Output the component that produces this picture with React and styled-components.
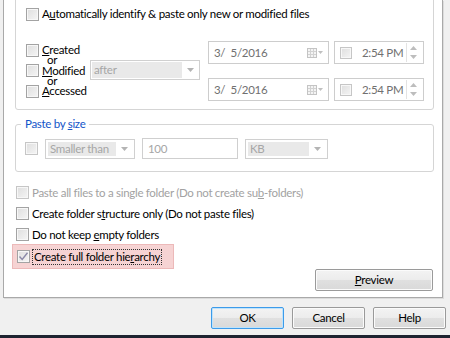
import React from 'react';
import styled, { createGlobalStyle } from 'styled-components';

const GlobalStyle = createGlobalStyle`
  html, body {
    margin: 0;
    padding: 0;
    background: #f0f0f0;
  }
  body {
    font-family: Lato, 'Noto Sans', sans-serif;
    font-size: 11.5px;
    letter-spacing: -0.3px;
    color: #000;
  }
`;

const Window = styled.div`
  width: 450px;
  height: 338px;
  overflow: hidden;
  display: flex;
  flex-direction: column;
  background: #f0f0f0;
`;

const Panel = styled.div`
  box-sizing: border-box;
  margin-left: 3px;
  width: 440px;
  height: 298px;
  background: #fff;
  border: 1px solid #a9a9a9;
  border-top: none;
  box-shadow: 1px 1px 0 #dcdcdc;
  padding: 0 8px 10px 11px;
  display: flex;
  flex-direction: column;
`;

const GroupBox = styled.fieldset`
  margin: ${(p) => p.$top}px 0 0;
  padding: 0;
  border: 1px solid #d5d5d5;
  border-radius: 3px;
  min-width: 0;
`;

const Legend = styled.legend`
  margin-left: 5px;
  padding: 0 4px;
  line-height: 14px;
  color: #1255c9;
`;

const Key = styled.u`
  text-decoration-thickness: 1px;
  text-underline-offset: 1px;
`;

const CheckRow = styled.div`
  display: flex;
  align-items: center;
  gap: 3px;
  height: ${(p) => (p.$h ? `${p.$h}px` : 'auto')};
  line-height: ${(p) => (p.$h ? `${p.$h}px` : '14px')};
  color: ${(p) => (p.$disabled ? '#a2a2a2' : '#000')};
  white-space: nowrap;
`;

const Box = styled.span`
  box-sizing: border-box;
  flex: none;
  width: ${(p) => p.$size || 13}px;
  height: ${(p) => p.$size || 13}px;
  border: 1px solid ${(p) => (p.$disabled ? '#c6c6c6' : '#a3a3a3')};
  background: linear-gradient(135deg, #dedede 0%, #f5f5f5 100%);
  box-shadow: inset 0 0 0 1px #f7f7f7;
  display: inline-flex;
  align-items: center;
  justify-content: center;
`;

const Check = ({ checked, disabled, size }) => (
  <Box $disabled={disabled} $size={size}>
    {checked && (
      <svg width="11" height="11" viewBox="0 0 11 11">
        <path d="M1.5 5.5 L4.2 8.5 L9.5 1.8" fill="none" stroke="#8b89a8" strokeWidth="1.4" />
      </svg>
    )}
  </Box>
);

const TopInner = styled.div`
  padding: 7px 0 8px 10px;
`;

const DateBlock = styled.div`
  margin-top: 20px;
  display: flex;
  align-items: flex-start;
`;

const CheckColumn = styled.div`
  width: 64px;
  margin-top: 4px;
  display: flex;
  flex-direction: column;
`;

const OrText = styled.div`
  height: 10.3px;
  line-height: 10.3px;
  padding-left: 21px;
`;

const Combo = styled.div`
  box-sizing: border-box;
  width: ${(p) => p.$w}px;
  height: ${(p) => p.$h}px;
  border: 1px solid #d0d0d0;
  background: #fff;
  padding: ${(p) => p.$pad}px;
  display: flex;
  flex: none;
  margin-top: ${(p) => p.$mt || 0}px;
`;

const ComboField = styled.div`
  flex: 1;
  background: #e9e9e9;
  color: #a6a6a6;
  padding-left: 2px;
  display: flex;
  align-items: center;
  line-height: 14px;
  white-space: nowrap;
  overflow: hidden;
`;

const ComboArrow = styled.div`
  width: 16px;
  display: flex;
  align-items: center;
  justify-content: center;
`;

const Arrow = ({ color = '#b4b4b4' }) => (
  <svg width="7" height="4" viewBox="0 0 7 4">
    <path d="M0 0 H7 L3.5 4 Z" fill={color} />
  </svg>
);

const PickerGrid = styled.div`
  margin-left: 8px;
  display: grid;
  grid-template-columns: 121px 90px;
  column-gap: 5px;
  row-gap: 14px;
`;

const Picker = styled.div`
  box-sizing: border-box;
  height: 23px;
  border: 1px solid #cdcdcd;
  background: #fff;
  display: flex;
  align-items: center;
  padding: 0 4px 0 5px;
  color: #707070;
  white-space: pre;
`;

const PickerText = styled.span`
  flex: 1;
  line-height: 14px;
`;

const CalIcon = () => (
  <svg width="17" height="10" viewBox="0 0 17 10">
    <rect x="0.5" y="0.5" width="9" height="9" fill="#f4f4f4" stroke="#c4c4c4" />
    <path d="M1 3.5 H9 M1 6.5 H9 M3.5 1 V9 M6.5 1 V9" stroke="#d2d2d2" />
    <path d="M11 3 H16 L13.5 6 Z" fill="#c0c0c0" />
  </svg>
);

const TimeText = styled.span`
  flex: 1;
  margin-left: 10px;
  line-height: 14px;
`;

const Spin = styled.div`
  box-sizing: border-box;
  width: 13px;
  height: 19px;
  border-left: 1px solid #e3e3e3;
  display: flex;
  flex-direction: column;
  align-items: center;
  justify-content: space-around;
`;

const SpinBtn = ({ up }) => (
  <svg width="7" height="4" viewBox="0 0 7 4">
    <path d={up ? 'M0 4 H7 L3.5 0 Z' : 'M0 0 H7 L3.5 4 Z'} fill="#bdbdbd" />
  </svg>
);

const SizeRow = styled.div`
  display: flex;
  align-items: center;
  gap: 7px;
  padding: 7px 0 12px 9px;
`;

const TextInput = styled.div`
  box-sizing: border-box;
  width: ${(p) => p.$w}px;
  height: 21px;
  border: 1px solid #cfcfcf;
  background: #fff;
  color: #a6a6a6;
  padding-left: 5px;
  display: flex;
  align-items: center;
  line-height: 14px;
`;

const Options = styled.div`
  margin-top: 10px;
  display: flex;
  flex-direction: column;
`;

const OptionRow = styled(CheckRow)`
  height: 21px;
  padding-left: 1px;
`;

const Highlight = styled(CheckRow)`
  align-self: flex-start;
  box-sizing: border-box;
  height: 25px;
  margin: -1px 0 0 -3px;
  padding: 0 12px 0 4px;
  background: #f6d3d3;
  border: 1px solid #ecb9b9;
`;

const Focus = styled.span`
  outline: 1px dotted #333;
  outline-offset: 0;
  padding: 0 1px;
`;

const PreviewRow = styled.div`
  margin-top: auto;
  display: flex;
  justify-content: flex-end;
  padding-right: 1px;
`;

const Button = styled.div`
  box-sizing: border-box;
  width: ${(p) => p.$w}px;
  height: 22px;
  border: 1px solid ${(p) => (p.$default ? '#3c9bea' : '#9a9a9a')};
  border-radius: 2px;
  background: linear-gradient(#f3f3f3 0%, #ececec 50%, #e0e0e0 51%, #d9d9d9 100%);
  box-shadow: inset 0 0 0 1px ${(p) => (p.$default ? '#bfe3fb' : '#fbfbfb')};
  display: flex;
  align-items: center;
  justify-content: center;
  line-height: 14px;
  color: #000;
`;

const ButtonBar = styled.div`
  margin-top: 9px;
  display: flex;
  justify-content: flex-end;
  gap: 8px;
  padding-right: 4px;
`;

const Taskbar = styled.div`
  margin-top: auto;
  height: 3px;
  background: #1e2330;
`;

export default function App() {
  return (
    <Window>
      <GlobalStyle />
      <Panel>
        <GroupBox $top={-14}>
          <Legend>
            Paste by <Key>d</Key>ate
          </Legend>
          <TopInner>
            <CheckRow>
              <Check />
              <span>
                A<Key>u</Key>tomatically identify &amp; paste only new or modified files
              </span>
            </CheckRow>
            <DateBlock>
              <CheckColumn>
                <CheckRow $h={10.3}>
                  <Check />
                  <span>
                    <Key>C</Key>reated
                  </span>
                </CheckRow>
                <OrText>or</OrText>
                <CheckRow $h={10.3}>
                  <Check />
                  <span>
                    <Key>M</Key>odified
                  </span>
                </CheckRow>
                <OrText>or</OrText>
                <CheckRow $h={10.3}>
                  <Check />
                  <span>
                    <Key>A</Key>ccessed
                  </span>
                </CheckRow>
              </CheckColumn>
              <Combo $w={110} $h={20} $pad={1} $mt={19}>
                <ComboField>after</ComboField>
                <ComboArrow>
                  <Arrow />
                </ComboArrow>
              </Combo>
              <PickerGrid>
                <Picker>
                  <PickerText>3/  5/2016</PickerText>
                  <CalIcon />
                </Picker>
                <Picker>
                  <Check size={12} disabled />
                  <TimeText>2:54 PM</TimeText>
                  <Spin>
                    <SpinBtn up />
                    <SpinBtn />
                  </Spin>
                </Picker>
                <Picker>
                  <PickerText>3/  5/2016</PickerText>
                  <CalIcon />
                </Picker>
                <Picker>
                  <Check size={12} disabled />
                  <TimeText>2:54 PM</TimeText>
                  <Spin>
                    <SpinBtn up />
                    <SpinBtn />
                  </Spin>
                </Picker>
              </PickerGrid>
            </DateBlock>
          </TopInner>
        </GroupBox>

        <GroupBox $top={7}>
          <Legend>
            Paste by <Key>s</Key>ize
          </Legend>
          <SizeRow>
            <Check disabled />
            <Combo $w={90} $h={20} $pad={2}>
              <ComboField>Smaller than</ComboField>
              <ComboArrow>
                <Arrow />
              </ComboArrow>
            </Combo>
            <TextInput $w={96}>100</TextInput>
            <Combo $w={83} $h={20} $pad={2}>
              <ComboField>KB</ComboField>
              <ComboArrow>
                <Arrow />
              </ComboArrow>
            </Combo>
          </SizeRow>
        </GroupBox>

        <Options>
          <OptionRow $disabled>
            <Check disabled />
            <span>
              Paste all files to a single folder (Do not create su<Key>b</Key>-folders)
            </span>
          </OptionRow>
          <OptionRow>
            <Check />
            <span>
              Create folder s<Key>t</Key>ructure only (Do not paste files)
            </span>
          </OptionRow>
          <OptionRow>
            <Check />
            <span>
              Do not keep <Key>e</Key>mpty folders
            </span>
          </OptionRow>
          <Highlight>
            <Check checked />
            <Focus>
              Create full folder hie<Key>r</Key>archy
            </Focus>
          </Highlight>
        </Options>

        <PreviewRow>
          <Button $w={118}>
            <span>
              <Key>P</Key>review
            </span>
          </Button>
        </PreviewRow>
      </Panel>

      <ButtonBar>
        <Button $w={73} $default>
          OK
        </Button>
        <Button $w={73}>Cancel</Button>
        <Button $w={73}>Help</Button>
      </ButtonBar>
      <Taskbar />
    </Window>
  );
}
